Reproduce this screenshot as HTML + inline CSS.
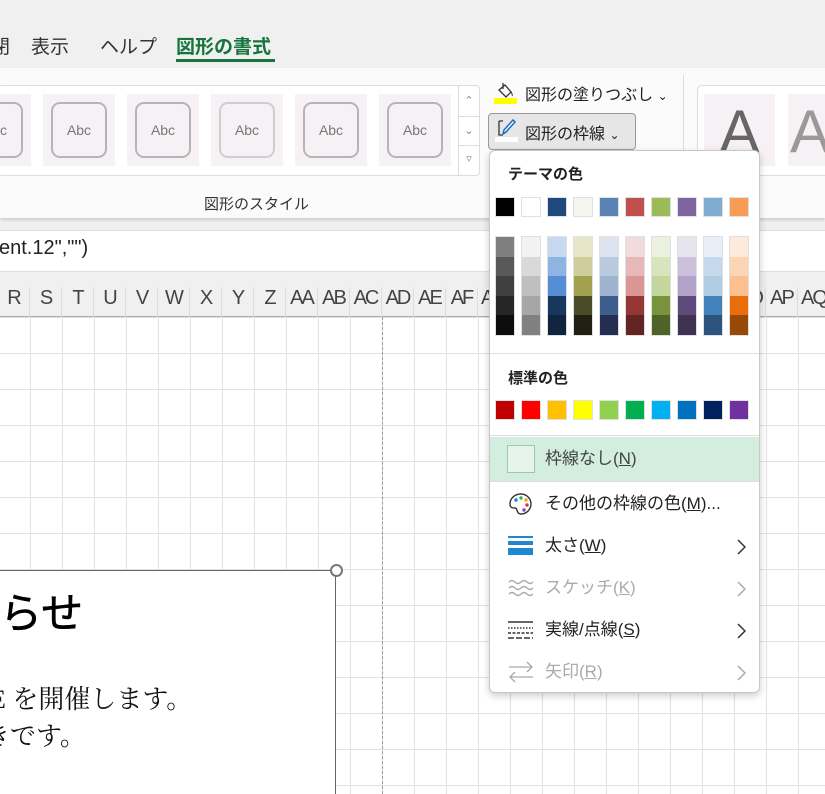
<!DOCTYPE html>
<html><head><meta charset="utf-8"><style>
*{margin:0;padding:0;box-sizing:border-box}
html{width:825px;height:794px;overflow:hidden}
body{width:825px;height:794px;overflow:hidden;position:relative;background:#f0f0f0;font-family:"Liberation Sans","Noto Sans CJK JP",sans-serif;color:#222}
.a{position:absolute}
.tab{position:absolute;top:32px;font-size:19px;color:#333}
.ribbon{position:absolute;left:0;top:68px;width:825px;height:150px;background:#fbfbfb;box-shadow:0 2px 3px rgba(0,0,0,.15)}
.th{position:absolute;top:94px;width:72px;height:72px;background:#f6f1f4}
.th div{position:absolute;left:8px;top:8px;width:56px;height:56px;border:2px solid #b8b4b6;border-radius:9px;font-size:14px;color:#777;text-align:center;line-height:52px}
.sheet{position:absolute;left:0;top:317px;width:825px;height:477px;background-color:#fff;
background-image:linear-gradient(90deg,#e1e1e1 1px,transparent 1px),linear-gradient(#e1e1e1 1px,transparent 1px);
background-size:32px 36px;background-position:30px 36px}
.hdr{position:absolute;left:0;top:285px;width:825px;height:32px;background:#f0f0f0;border-bottom:1px solid #aaa}
.hdr span{position:absolute;top:2px;width:32px;text-align:center;font-size:20px;color:#444;letter-spacing:-2px;white-space:nowrap;border-right:1px solid #ddd;height:30px}
.menu{position:absolute;left:489px;top:150px;width:271px;height:543px;background:#fff;border:1px solid #c8c8c8;border-radius:6px;box-shadow:0 3px 8px rgba(0,0,0,.2)}
.sw{position:absolute;width:20px;height:20px;border:1px solid #e0e0e0}
.col{position:absolute;top:85px;width:20px;height:100px;border:1px solid #e0e0e0}
.col i{display:block;height:19.6px}
.h{position:absolute;left:18px;font-size:15px;font-weight:bold;color:#222}
.it{position:absolute;left:0;width:269px;height:42px;font-size:17px;line-height:42px}
.it .t{position:absolute;left:55px}
.it svg.c{position:absolute;left:246px;top:14px}
.dis{color:#aaa}
u{text-decoration:underline}
.clip{position:absolute;left:0;top:0;width:825px;height:794px;overflow:hidden}
</style></head><body><div class="clip">
<div class="tab" style="left:-9px">閉</div>
<div class="tab" style="left:31px">表示</div>
<div class="tab" style="left:100px">ヘルプ</div>
<div class="tab" style="left:176px;color:#17743e;font-weight:bold">図形の書式</div>
<div class="a" style="left:176px;top:59px;width:99px;height:3px;background:#17743e"></div>
<div class="ribbon"></div>
<div class="a" style="left:-2px;top:85px;width:482px;height:91px;border:1px solid #ddd;border-radius:4px;background:#fff"></div>
<div class="th" style="left:-41px"><div>Abc</div></div>
<div class="th" style="left:43px"><div>Abc</div></div>
<div class="th" style="left:127px"><div>Abc</div></div>
<div class="th" style="left:211px"><div style="border-color:#d0cdcf">Abc</div></div>
<div class="th" style="left:295px"><div>Abc</div></div>
<div class="th" style="left:379px"><div>Abc</div></div>
<div class="a" style="left:458px;top:86px;width:21px;height:89px;border-left:1px solid #ddd;font-size:11px;color:#888;text-align:center">
<div style="height:31px;line-height:31px;border-bottom:1px solid #ddd">⌃</div><div style="height:29px;line-height:29px;border-bottom:1px solid #ddd">⌄</div><div style="line-height:26px">▿</div></div>
<div class="a" style="left:204px;top:193px;font-size:15px;color:#333">図形のスタイル</div>
<div class="a" style="left:683px;top:75px;width:1px;height:80px;background:#ddd"></div>
<div class="a" style="left:697px;top:85px;width:140px;height:91px;border:1px solid #ddd;border-radius:5px;background:#fff"></div>
<div class="a" style="left:704px;top:94px;width:71px;height:72px;background:#f6f1f4;font-size:60px;color:#666;text-align:center;line-height:76px">A</div>
<div class="a" style="left:788px;top:94px;width:50px;height:72px;background:#f6f1f4;font-size:60px;color:#999;line-height:76px;padding-left:2px">A</div>
<svg class="a" style="left:494px;top:80px" width="24" height="26"><path d="M9 3v6M5 10l6-5 6 7-5 5z" fill="none" stroke="#333" stroke-width="1.3"/><path d="M17 12c1 2 2 3 1 4" stroke="#333" fill="none"/><rect x="0" y="18" width="23" height="6" fill="#ffff00"/></svg>
<div class="a" style="left:525px;top:81px;font-size:16px;color:#222">図形の塗りつぶし <span style="font-size:12px">⌄</span></div>
<div class="a" style="left:488px;top:113px;width:148px;height:37px;background:#e6e6e6;border:1px solid #999;border-radius:4px"></div>
<svg class="a" style="left:495px;top:117px" width="24" height="26"><path d="M4 4h4M4 4v14h4" stroke="#333" fill="none" stroke-width="1.3"/><path d="M8 17l3-2 9-10-2-2-9 10z" fill="#fff" stroke="#1d6bc0" stroke-width="1.5"/><rect x="0" y="20" width="23" height="5" fill="#fff"/></svg>
<div class="a" style="left:525px;top:120px;font-size:16px;color:#222">図形の枠線 <span style="font-size:12px">⌄</span></div>
<div class="a" style="left:0;top:230px;width:825px;height:42px;background:#fff;border-top:1px solid #ddd;border-bottom:1px solid #ddd"></div>
<div class="a" style="left:-1px;top:237px;font-size:20px;color:#222">ent.12","")</div>
<div class="sheet"></div>
<div class="hdr">
<span style="left:-2px">R</span><span style="left:30px">S</span><span style="left:62px">T</span><span style="left:94px">U</span><span style="left:126px">V</span><span style="left:158px">W</span><span style="left:190px">X</span><span style="left:222px">Y</span><span style="left:254px">Z</span><span style="left:286px">AA</span><span style="left:318px">AB</span><span style="left:350px">AC</span><span style="left:382px">AD</span><span style="left:414px">AE</span><span style="left:446px">AF</span><span style="left:478px">AG</span><span style="left:734px">AO</span><span style="left:766px">AP</span><span style="left:798px">AQ</span></div>
<div class="a" style="left:382px;top:317px;height:477px;border-left:1px dashed #999"></div>
<div class="a" style="left:-5px;top:570px;width:341px;height:240px;background:#fff;border:1px solid #666"></div>
<div class="a" style="left:330px;top:564px;width:13px;height:13px;border-radius:50%;border:2px solid #777;background:#fff"></div>
<div class="a" style="left:0;top:580px;font-size:42px;color:#000;-webkit-text-stroke:0.6px #000">らせ</div>
<div class="a" style="left:-10px;top:679px;font-size:26px;font-family:'Liberation Serif','Noto Serif CJK SC',serif;color:#111">E を開催します。</div>
<div class="a" style="left:-16px;top:716px;font-size:26px;font-family:'Liberation Serif','Noto Serif CJK SC',serif;color:#111">きです。</div>
<div class="a" style="left:10px;top:788px;font-size:26px;font-family:'Liberation Serif','Noto Serif CJK SC',serif;color:#111">、参加を募集</div>
<div class="menu">
<div class="h" style="top:12px">テーマの色</div>
<div class="sw" style="left:5px;top:46px;background:#000"></div>
<div class="sw" style="left:31px;top:46px;background:#fff"></div>
<div class="sw" style="left:57px;top:46px;background:#1f497d"></div>
<div class="sw" style="left:83px;top:46px;background:#f6f6f0"></div>
<div class="sw" style="left:109px;top:46px;background:#5a82b4"></div>
<div class="sw" style="left:135px;top:46px;background:#c0504d"></div>
<div class="sw" style="left:161px;top:46px;background:#9bbb59"></div>
<div class="sw" style="left:187px;top:46px;background:#8064a2"></div>
<div class="sw" style="left:213px;top:46px;background:#7fabd0"></div>
<div class="sw" style="left:239px;top:46px;background:#f79b55"></div>
<div class="col" style="left:5px"><i style="background:#7f7f7f"></i><i style="background:#595959"></i><i style="background:#404040"></i><i style="background:#262626"></i><i style="background:#0d0d0d"></i></div>
<div class="col" style="left:31px"><i style="background:#f2f2f2"></i><i style="background:#d9d9d9"></i><i style="background:#bfbfbf"></i><i style="background:#a6a6a6"></i><i style="background:#808080"></i></div>
<div class="col" style="left:57px"><i style="background:#c6d9f1"></i><i style="background:#8eb4e3"></i><i style="background:#558ed5"></i><i style="background:#17375e"></i><i style="background:#10243f"></i></div>
<div class="col" style="left:83px"><i style="background:#e8e6c8"></i><i style="background:#d0cd9d"></i><i style="background:#a3a04f"></i><i style="background:#4c4b28"></i><i style="background:#1f1f12"></i></div>
<div class="col" style="left:109px"><i style="background:#dde4ef"></i><i style="background:#b9cade"></i><i style="background:#9db3d0"></i><i style="background:#3e5d8a"></i><i style="background:#262d52"></i></div>
<div class="col" style="left:135px"><i style="background:#f2dcdb"></i><i style="background:#e6b9b8"></i><i style="background:#d99694"></i><i style="background:#953735"></i><i style="background:#632523"></i></div>
<div class="col" style="left:161px"><i style="background:#ebf1de"></i><i style="background:#d7e4bd"></i><i style="background:#c3d69b"></i><i style="background:#77933c"></i><i style="background:#4f6228"></i></div>
<div class="col" style="left:187px"><i style="background:#e6e4ec"></i><i style="background:#ccc1da"></i><i style="background:#b3a2c7"></i><i style="background:#604a7b"></i><i style="background:#3e3250"></i></div>
<div class="col" style="left:213px"><i style="background:#e8eef6"></i><i style="background:#c5d9ec"></i><i style="background:#b0cde3"></i><i style="background:#4282bb"></i><i style="background:#2d547c"></i></div>
<div class="col" style="left:239px"><i style="background:#fdeada"></i><i style="background:#fcd5b5"></i><i style="background:#fac090"></i><i style="background:#ea6d0c"></i><i style="background:#984807"></i></div>
<div class="a" style="left:0;top:202px;width:269px;height:1px;background:#ddd"></div>
<div class="h" style="top:216px">標準の色</div>
<div class="sw" style="left:5px;top:249px;background:#c00000"></div>
<div class="sw" style="left:31px;top:249px;background:#ff0000"></div>
<div class="sw" style="left:57px;top:249px;background:#ffc000"></div>
<div class="sw" style="left:83px;top:249px;background:#ffff00"></div>
<div class="sw" style="left:109px;top:249px;background:#92d050"></div>
<div class="sw" style="left:135px;top:249px;background:#00b050"></div>
<div class="sw" style="left:161px;top:249px;background:#00b0f0"></div>
<div class="sw" style="left:187px;top:249px;background:#0070c0"></div>
<div class="sw" style="left:213px;top:249px;background:#002060"></div>
<div class="sw" style="left:239px;top:249px;background:#7030a0"></div>
<div class="a" style="left:0;top:284px;width:269px;height:1px;background:#ddd"></div>
<div class="it" style="top:286px;height:44px;line-height:44px;background:#d3eedf;color:#444">
<div class="a" style="left:17px;top:8px;width:28px;height:28px;border:1px solid #9cc9ac;background:#e6f4ec"></div>
<span class="t">枠線なし(<u>N</u>)</span></div>
<div class="a" style="left:0;top:330px;width:269px;height:1px;background:#ddd"></div>
<div class="it" style="top:332px">
<svg class="a" style="left:18px;top:9px" width="26" height="24"><path d="M13 2C6 2 2 7 2 12c0 4 3 4 5 4 3 0 1 6 6 6 6 0 10-5 10-10S19 2 13 2z" fill="#fff" stroke="#333" stroke-width="1.4"/><circle cx="8" cy="8" r="1.7" fill="#2a7bd6"/><circle cx="13" cy="6" r="1.7" fill="#3cb04a"/><circle cx="18" cy="8" r="1.7" fill="#f0a020"/><circle cx="19" cy="13" r="1.7" fill="#e03030"/><circle cx="16" cy="18" r="1.7" fill="#9040b0"/></svg>
<span class="t">その他の枠線の色(<u>M</u>)...</span></div>
<div class="it" style="top:374px">
<svg class="a" style="left:18px;top:11px" width="26" height="22"><rect y="0" width="25" height="2" fill="#1e88d0"/><rect y="5" width="25" height="4" fill="#1e88d0"/><rect y="12" width="25" height="7" fill="#1e88d0"/></svg>
<span class="t">太さ(<u>W</u>)</span><svg class="c" width="10" height="16"><path d="M2 1l7 7-7 7" fill="none" stroke="#333" stroke-width="1.5"/></svg></div>
<div class="it dis" style="top:416px">
<svg class="a" style="left:18px;top:12px" width="26" height="20"><path d="M1 3q3-3 6 0t6 0 6 0 6 0M1 9q3-3 6 0t6 0 6 0 6 0M1 15q3-3 6 0t6 0 6 0 6 0" fill="none" stroke="#aaa" stroke-width="1.3"/></svg>
<span class="t">スケッチ(<u>K</u>)</span><svg class="c" width="10" height="16"><path d="M2 1l7 7-7 7" fill="none" stroke="#aaa" stroke-width="1.5"/></svg></div>
<div class="it" style="top:458px">
<svg class="a" style="left:18px;top:11px" width="26" height="20"><path d="M0 2h25" stroke="#333" stroke-width="1.5"/><path d="M0 8h25" stroke="#333" stroke-width="1.5" stroke-dasharray="1.5 1.5"/><path d="M0 13h25" stroke="#333" stroke-width="1.5" stroke-dasharray="3 1.5"/><path d="M0 18h25" stroke="#333" stroke-width="1.5" stroke-dasharray="6 2"/></svg>
<span class="t">実線/点線(<u>S</u>)</span><svg class="c" width="10" height="16"><path d="M2 1l7 7-7 7" fill="none" stroke="#333" stroke-width="1.5"/></svg></div>
<div class="it dis" style="top:500px">
<svg class="a" style="left:18px;top:10px" width="26" height="22"><path d="M1 6h23M19 1l5 5-5 5M25 16H2M7 11l-5 5 5 5" fill="none" stroke="#aaa" stroke-width="1.3"/></svg>
<span class="t">矢印(<u>R</u>)</span><svg class="c" width="10" height="16"><path d="M2 1l7 7-7 7" fill="none" stroke="#aaa" stroke-width="1.5"/></svg></div>
</div>
</div></body></html>
